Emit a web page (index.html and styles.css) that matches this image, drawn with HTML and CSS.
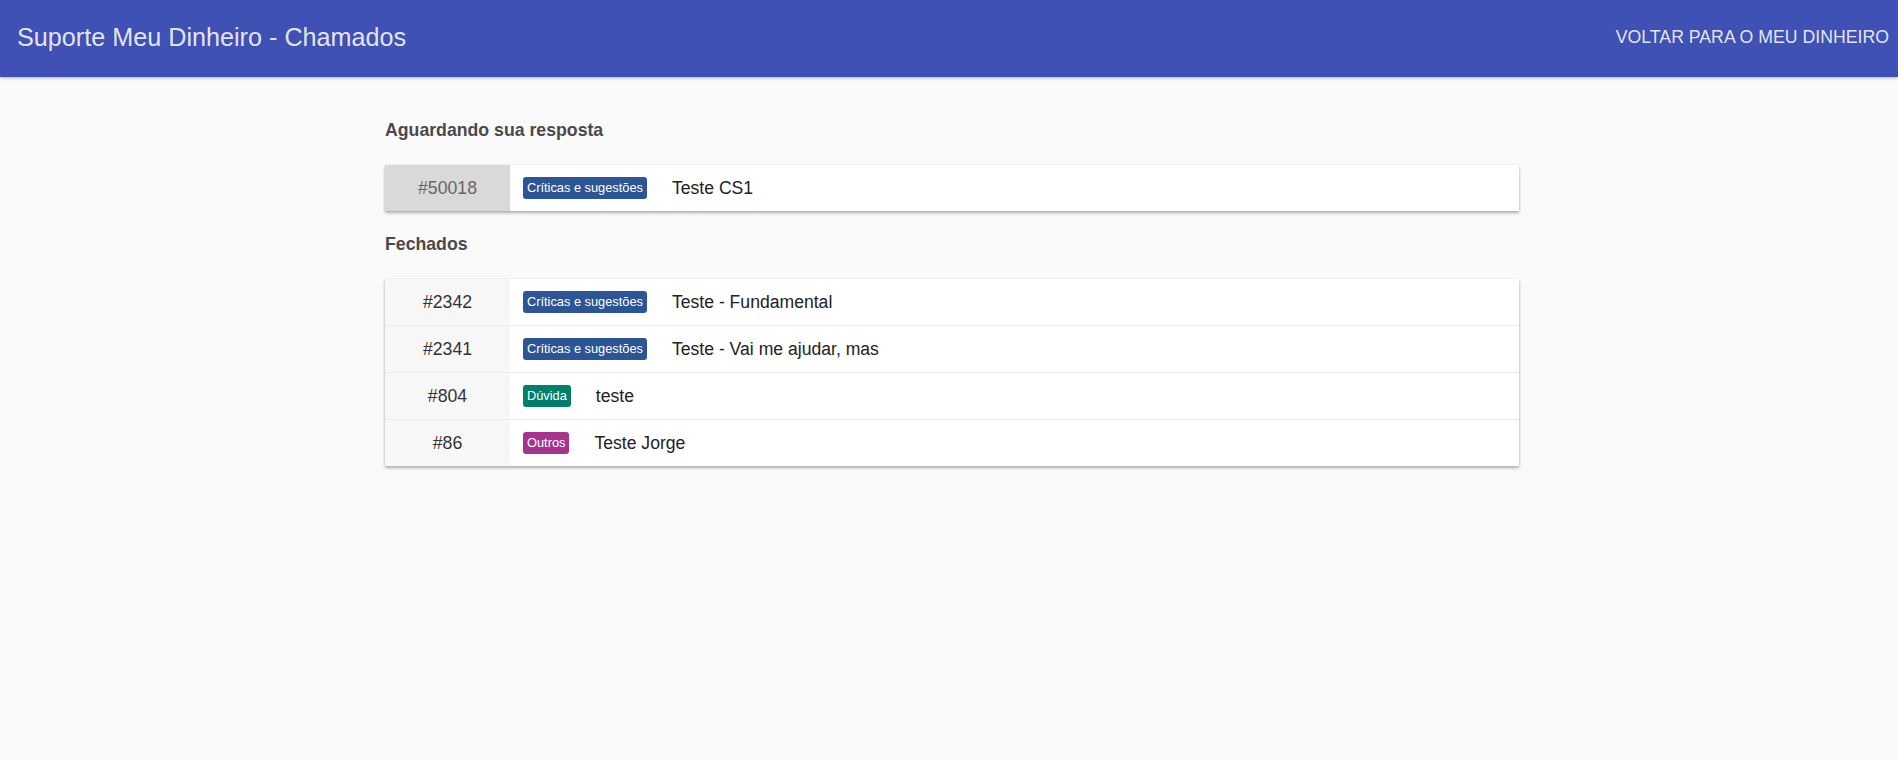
FILE: index.html
```html
<!doctype html>
<html>
<head>
  <meta charset="utf-8">
  <title>Suporte Meu Dinheiro - Chamados</title>
  <link rel="stylesheet" href="styles.css">
</head>
<body>

  <div class="toolbar">
    <span class="toolbar-title">Suporte Meu Dinheiro - Chamados</span>
    <a class="toolbar-link" href="#">Voltar para o Meu Dinheiro</a>
  </div>

  <div class="content">
    <h3 class="section-title">Aguardando sua resposta</h3>
    <div class="ticket-list">
      <div class="ticket waiting">
        <div class="ticket-id">#50018</div>
        <div class="ticket-body">
          <span class="tag tag-blue">Críticas e sugestões</span>
          <span class="ticket-name">Teste CS1</span>
        </div>
      </div>
    </div>

    <h3 class="section-title">Fechados</h3>
    <div class="ticket-list">
      <div class="ticket">
        <div class="ticket-id">#2342</div>
        <div class="ticket-body">
          <span class="tag tag-blue">Críticas e sugestões</span>
          <span class="ticket-name">Teste - Fundamental</span>
        </div>
      </div>
      <div class="ticket">
        <div class="ticket-id">#2341</div>
        <div class="ticket-body">
          <span class="tag tag-blue">Críticas e sugestões</span>
          <span class="ticket-name">Teste - Vai me ajudar, mas</span>
        </div>
      </div>
      <div class="ticket">
        <div class="ticket-id">#804</div>
        <div class="ticket-body">
          <span class="tag tag-green">Dúvida</span>
          <span class="ticket-name">teste</span>
        </div>
      </div>
      <div class="ticket">
        <div class="ticket-id">#86</div>
        <div class="ticket-body">
          <span class="tag tag-purple">Outros</span>
          <span class="ticket-name">Teste Jorge</span>
        </div>
      </div>
    </div>
  </div>

</body>
</html>
```

FILE: styles.css
```css
* {
    margin: 0;
    padding: 0;
    box-sizing: border-box;
}
body {
    font-family: "Liberation Sans", Arial, sans-serif;
    background-color: #fafafa;
    color: #333;
}

/* top bar */
.toolbar {
    height: 77px;
    background: #3f51b5;
    display: flex;
    align-items: center;
    justify-content: space-between;
    padding: 0 9px 0 17px;
    box-shadow: 0 1px 3px rgba(0,0,0,0.3);
    color: rgba(255,255,255,0.87);
}
.toolbar-title {
    font-size: 25.2px;
    margin-top: -2px;
}
.toolbar-link {
    color: rgba(255,255,255,0.87);
    text-decoration: none;
    text-transform: uppercase;
    font-size: 17.7px;
    margin-top: -2px;
}

/* tickets */
.content {
    width: 1134px;
    margin: 0 auto;
    padding-top: 43px;
    position: relative;
    left: 3px;
}
.section-title {
    font-size: 17.7px;
    font-weight: bold;
    color: #4a4a4a;
    height: 45px;
}
.ticket-list {
    background: #fff;
    box-shadow: 0 2px 3px rgba(0,0,0,0.3), 0 0 2px rgba(0,0,0,0.08);
    margin-bottom: 23px;
}
.ticket {
    display: flex;
    height: 47px;
    border-top: 1px solid #ececec;
}
.ticket:first-child {
    border-top: none;
    height: 46px;
}
.ticket-id {
    width: 125px;
    background: #f7f7f7;
    display: flex;
    align-items: center;
    justify-content: center;
    font-size: 17.7px;
    color: #333;
}
.waiting .ticket-id {
    background: #d9d9d9;
    color: #666;
}
.ticket-body {
    display: flex;
    align-items: center;
    padding-left: 13px;
}
.tag {
    color: #fff;
    font-size: 12.8px;
    height: 22px;
    line-height: 22px;
    padding: 0 4px;
    border-radius: 3px;
    margin-right: 25px;
}
.tag-blue { background: #2b5594; }
.tag-green { background: #00806a; }
.tag-purple { background: #a6338c; }
.ticket-name {
    font-size: 17.6px;
    color: #222;
}
```
